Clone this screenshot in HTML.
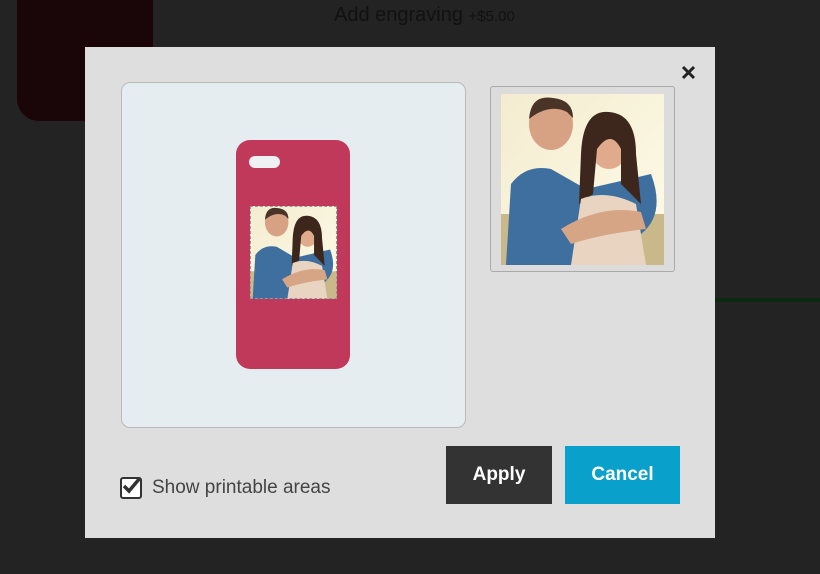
<!DOCTYPE html>
<html><head><style>
body{margin:0;width:820px;height:574px;background:#232323;position:relative;overflow:hidden;font-family:"Liberation Sans",sans-serif}
.a{position:absolute}
</style></head><body>
<div class="a" style="left:17px;top:0;width:136px;height:121px;background:#1a0609;border-radius:0 0 0 22px"></div>
<div class="a" style="left:334px;top:4px;color:#111;font-size:20px;">Add engraving <span style="font-size:15px">+$5.00</span></div>
<div class="a" style="left:715px;top:298px;width:105px;height:4px;background:#0a2a12"></div>
<div class="a" style="left:85px;top:47px;width:630px;height:491px;background:#dedede"></div>
<svg class="a" style="left:680px;top:64px" width="17" height="17"><path d="M3 3L14 14M14 3L3 14" stroke="#222" stroke-width="3"/></svg>
<div class="a" style="left:121px;top:82px;width:343px;height:344px;background:#e6edf1;border:1px solid #b9b9b9;border-radius:9px"></div>
<div class="a" style="left:236px;top:140px;width:114px;height:229px;background:#c0385a;border-radius:14px"></div>
<div class="a" style="left:249px;top:156px;width:31px;height:12px;background:#eef0f2;border-radius:6px"></div>
<svg class="a" style="left:250px;top:206px" width="87" height="93" viewBox="0 0 163 171" preserveAspectRatio="none">
<defs><linearGradient id="g" x1="0" y1="0" x2="1" y2="1"><stop offset="0" stop-color="#f3ecd0"/><stop offset="1" stop-color="#fffbe8"/></linearGradient></defs>
<rect width="163" height="171" fill="url(#g)"/>
<rect x="0" y="120" width="163" height="51" fill="#c9b98a"/>
<ellipse cx="50" cy="30" rx="22" ry="26" fill="#d7a184"/><path d="M28 25Q30 0 52 4Q72 6 72 24L66 18Q50 10 32 22Z" fill="#4a3428"/>
<path d="M5 171L10 90Q25 70 50 75L85 95L150 80Q165 120 140 140L90 171Z" fill="#3e6f9f"/>
<ellipse cx="108" cy="50" rx="20" ry="25" fill="#e0ab8c"/><path d="M80 60Q82 15 108 18Q135 20 135 60L140 110L120 90L120 55Q110 35 96 55L92 100L78 110Z" fill="#3d271c"/>
<path d="M70 171L80 105Q105 95 135 110L145 171Z" fill="#e9d4c1"/>
<path d="M60 135Q100 110 140 118L145 135Q100 140 70 150Z" fill="#d6a585"/>
</svg>
<div class="a" style="left:250px;top:206px;width:85px;height:91px;border:1px dashed #999"></div>
<div class="a" style="left:490px;top:86px;width:183px;height:184px;border:1px solid #aaa;border-radius:3px;background:#dcdcdc"></div>
<svg class="a" style="left:501px;top:94px" width="163" height="171" viewBox="0 0 163 171">
<defs><linearGradient id="h" x1="0" y1="0" x2="1" y2="1"><stop offset="0" stop-color="#f3ecd0"/><stop offset="1" stop-color="#fffbe8"/></linearGradient></defs>
<rect width="163" height="171" fill="url(#h)"/>
<rect x="0" y="120" width="163" height="51" fill="#c9b98a"/>
<ellipse cx="50" cy="30" rx="22" ry="26" fill="#d7a184"/><path d="M28 25Q30 0 52 4Q72 6 72 24L66 18Q50 10 32 22Z" fill="#4a3428"/>
<path d="M5 171L10 90Q25 70 50 75L85 95L150 80Q165 120 140 140L90 171Z" fill="#3e6f9f"/>
<ellipse cx="108" cy="50" rx="20" ry="25" fill="#e0ab8c"/><path d="M80 60Q82 15 108 18Q135 20 135 60L140 110L120 90L120 55Q110 35 96 55L92 100L78 110Z" fill="#3d271c"/>
<path d="M70 171L80 105Q105 95 135 110L145 171Z" fill="#e9d4c1"/>
<path d="M60 135Q100 110 140 118L145 135Q100 140 70 150Z" fill="#d6a585"/>
</svg>
<div class="a" style="left:120px;top:477px;width:18px;height:18px;border:2px solid #333;border-radius:3px;background:#fff"></div>
<svg class="a" style="left:121px;top:476px" width="22" height="20"><path d="M3 10L8 15L19 2" stroke="#333" stroke-width="3.5" fill="none"/></svg>
<div class="a" style="left:152px;top:477px;font-size:19px;color:#444">Show printable areas</div>
<div class="a" style="left:446px;top:446px;width:106px;height:58px;background:#333;color:#fff;font-weight:bold;font-size:19px;line-height:58px;text-align:center">Apply</div>
<div class="a" style="left:565px;top:446px;width:115px;height:58px;background:#0aa0cc;color:#fff;font-weight:bold;font-size:19px;line-height:58px;text-align:center">Cancel</div>
</body></html>
